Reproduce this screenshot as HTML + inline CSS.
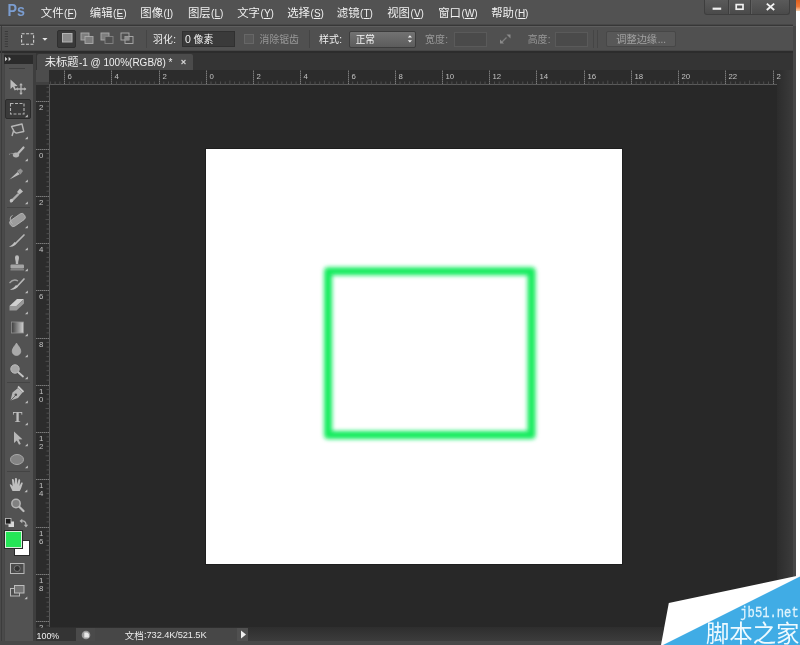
<!DOCTYPE html><html><head><meta charset="utf-8"><title>Photoshop</title><style>
html,body{margin:0;padding:0;background:#282828;}
body{width:800px;height:645px;overflow:hidden;position:relative;font-family:"Liberation Sans",sans-serif;}
#app{position:absolute;left:0;top:0;width:800px;height:645px;overflow:hidden;}
#app>div{position:absolute;}
#ov{position:absolute;left:0;top:0;filter:blur(0.4px);}
</style></head><body><div id="app">
<div style="left:0px;top:0px;width:800px;height:645px;background:#282828;"></div>
<div style="left:0px;top:0px;width:800px;height:26px;background:#525252;"></div>
<div style="left:0px;top:24px;width:793px;height:1px;background:#474747;"></div>
<div style="left:0px;top:25px;width:793px;height:1px;background:#373737;"></div>
<div style="left:0px;top:26px;width:800px;height:26px;background:#505050;"></div>
<div style="left:0px;top:26px;width:800px;height:1px;background:#5e5e5e;"></div>
<div style="left:0px;top:50px;width:800px;height:1px;background:#474747;"></div>
<div style="left:0px;top:51px;width:800px;height:2px;background:#2c2c2c;"></div>
<div style="left:36px;top:53px;width:760px;height:17px;background:#343434;"></div>
<div style="left:37px;top:54px;width:156px;height:16px;background:#4b4b4b;border-radius:2px 2px 0 0;"></div>
<div style="left:36px;top:70px;width:741px;height:15px;background:#2c2c2c;"></div>
<div style="left:49px;top:84px;width:728px;height:1px;background:#5a5a5a;"></div>
<div style="left:777px;top:70px;width:16px;height:558px;background:linear-gradient(90deg,#2c2c2c,#3b3b3b);"></div>
<div style="left:36px;top:70px;width:13px;height:12px;background:#4c4c4c;"></div>
<div style="left:36px;top:82px;width:13px;height:3px;background:#404040;"></div>
<div style="left:36px;top:85px;width:13px;height:543px;background:#2c2c2c;"></div>
<div style="left:49px;top:84px;width:1px;height:544px;background:#5a5a5a;"></div>
<div style="left:0px;top:53px;width:36px;height:592px;background:#3e3e3e;"></div>
<div style="left:2px;top:55px;width:31px;height:9px;background:#2b2b2b;"></div>
<div style="left:2px;top:64px;width:31px;height:577px;background:#525252;"></div>
<div style="left:0px;top:53px;width:4px;height:592px;background:#4a4a4a;"></div>
<div style="left:4px;top:64px;width:1px;height:577px;background:#464646;"></div>
<div style="left:1px;top:26px;width:1px;height:615px;background:#3c3c3c;"></div>
<div style="left:36px;top:627px;width:757px;height:14px;background:linear-gradient(#2e2e2e,#3c3c3c);"></div>
<div style="left:36px;top:628px;width:40px;height:13px;background:#343434;"></div>
<div style="left:76px;top:628px;width:19px;height:13px;background:#4a4a4a;"></div>
<div style="left:95px;top:628px;width:153px;height:13px;background:#474747;"></div>
<div style="left:0px;top:641px;width:800px;height:4px;background:#484848;"></div>
<div style="left:793px;top:26px;width:3px;height:619px;background:#474747;"></div>
<div style="left:796px;top:0px;width:4px;height:645px;background:#ffffff;"></div>
<div style="left:796px;top:0px;width:4px;height:11px;background:linear-gradient(#e2601c 0%,#ee7a3a 60%,#fbd9bc 100%);"></div>
<div style="left:205px;top:148px;width:418px;height:417px;background:#1e1e1e;"></div>
<div style="left:206px;top:149px;width:416px;height:415px;background:#ffffff;"></div>
<div style="left:704px;top:0px;width:86px;height:15px;background:linear-gradient(#5a5a5a,#4a4a4a);border:1px solid #3e3e3e;border-top:none;box-sizing:border-box;border-radius:0 0 3px 3px;"></div>
<div style="left:728px;top:0px;width:1px;height:14px;background:#3e3e3e;"></div>
<div style="left:750px;top:0px;width:1px;height:14px;background:#3e3e3e;"></div>
<div style="left:729px;top:0px;width:1px;height:14px;background:#5e5e5e;"></div>
<div style="left:751px;top:0px;width:1px;height:14px;background:#5e5e5e;"></div>
<div style="left:146px;top:30px;width:1px;height:18px;background:#454545;"></div>
<div style="left:57px;top:30px;width:19px;height:18px;background:#393939;border:1px solid #2f2f2f;box-sizing:border-box;border-radius:2px;"></div>
<div style="left:182px;top:31px;width:53px;height:16px;background:#3a3a3a;border:1px solid #303030;box-sizing:border-box;"></div>
<div style="left:244px;top:34px;width:10px;height:10px;background:#585858;border:1px solid #676767;box-sizing:border-box;"></div>
<div style="left:309px;top:30px;width:1px;height:18px;background:#444;"></div>
<div style="left:349px;top:31px;width:67px;height:17px;background:linear-gradient(#727272,#5c5c5c);border:1px solid #3c3c3c;box-sizing:border-box;border-radius:2px;"></div>
<div style="left:454px;top:32px;width:33px;height:15px;background:#4a4a4a;border:1px solid #5a5a5a;box-sizing:border-box;"></div>
<div style="left:555px;top:32px;width:33px;height:15px;background:#4a4a4a;border:1px solid #5a5a5a;box-sizing:border-box;"></div>
<div style="left:593px;top:30px;width:1px;height:18px;background:#454545;"></div>
<div style="left:597px;top:30px;width:1px;height:18px;background:#454545;"></div>
<div style="left:606px;top:31px;width:70px;height:16px;background:#585858;border:1px solid #474747;box-sizing:border-box;border-radius:2px;"></div>
<div style="left:9px;top:68px;width:16px;height:1px;background:#3f3f3f;"></div>
<div style="left:5px;top:99px;width:26px;height:20px;background:#3a3a3a;border:1px solid #2b2b2b;box-sizing:border-box;border-radius:2px;"></div>
<div style="left:7px;top:207px;width:23px;height:1px;background:#444444;"></div>
<div style="left:7px;top:382px;width:23px;height:1px;background:#444444;"></div>
<div style="left:7px;top:471px;width:23px;height:1px;background:#444444;"></div>
<div style="left:14px;top:540px;width:16px;height:16px;background:#ffffff;border:1px solid #2a2a2a;box-sizing:border-box;"></div>
<div style="left:5px;top:531px;width:17px;height:17px;background:#25e657;border:1px solid #d8f0dc;box-sizing:border-box;outline:1px solid #2a2a2a;"></div>
<div style="left:237px;top:628px;width:11px;height:13px;background:#505050;"></div>
<svg id="ov" width="800" height="645" viewBox="0 0 800 645">
<text x="0" y="0" transform="translate(7.5,16.2) scale(0.84,1)" font-family="Liberation Sans" font-size="17" font-weight="bold" fill="#7b9dd0">Ps</text>
<text x="40.8" y="17" font-family="'Liberation Sans', 'Noto Sans CJK SC', sans-serif" font-size="11.5" fill="#f0f0f0" text-anchor="start" textLength="22.8" lengthAdjust="spacingAndGlyphs">文件</text>
<text x="64.10000000000001" y="17" font-family="Liberation Sans" font-size="10" font-weight="normal" fill="#f0f0f0" text-anchor="start" >(</text>
<text x="67.50000000000001" y="17" font-family="Liberation Sans" font-size="10" font-weight="normal" fill="#f0f0f0" text-anchor="start" text-decoration="underline">F</text>
<text x="73.60000000000001" y="17" font-family="Liberation Sans" font-size="10" font-weight="normal" fill="#f0f0f0" text-anchor="start" >)</text>
<text x="89.8" y="17" font-family="'Liberation Sans', 'Noto Sans CJK SC', sans-serif" font-size="11.5" fill="#f0f0f0" text-anchor="start" textLength="22.8" lengthAdjust="spacingAndGlyphs">编辑</text>
<text x="113.09999999999998" y="17" font-family="Liberation Sans" font-size="10" font-weight="normal" fill="#f0f0f0" text-anchor="start" >(</text>
<text x="116.49999999999999" y="17" font-family="Liberation Sans" font-size="10" font-weight="normal" fill="#f0f0f0" text-anchor="start" text-decoration="underline">E</text>
<text x="123.19999999999999" y="17" font-family="Liberation Sans" font-size="10" font-weight="normal" fill="#f0f0f0" text-anchor="start" >)</text>
<text x="140.3" y="17" font-family="'Liberation Sans', 'Noto Sans CJK SC', sans-serif" font-size="11.5" fill="#f0f0f0" text-anchor="start" textLength="22.8" lengthAdjust="spacingAndGlyphs">图像</text>
<text x="163.5" y="17" font-family="Liberation Sans" font-size="10" font-weight="normal" fill="#f0f0f0" text-anchor="start" >(</text>
<text x="166.9" y="17" font-family="Liberation Sans" font-size="10" font-weight="normal" fill="#f0f0f0" text-anchor="start" text-decoration="underline">I</text>
<text x="169.70000000000002" y="17" font-family="Liberation Sans" font-size="10" font-weight="normal" fill="#f0f0f0" text-anchor="start" >)</text>
<text x="187.9" y="17" font-family="'Liberation Sans', 'Noto Sans CJK SC', sans-serif" font-size="11.5" fill="#f0f0f0" text-anchor="start" textLength="22.8" lengthAdjust="spacingAndGlyphs">图层</text>
<text x="211.1" y="17" font-family="Liberation Sans" font-size="10" font-weight="normal" fill="#f0f0f0" text-anchor="start" >(</text>
<text x="214.5" y="17" font-family="Liberation Sans" font-size="10" font-weight="normal" fill="#f0f0f0" text-anchor="start" text-decoration="underline">L</text>
<text x="220.1" y="17" font-family="Liberation Sans" font-size="10" font-weight="normal" fill="#f0f0f0" text-anchor="start" >)</text>
<text x="237.2" y="17" font-family="'Liberation Sans', 'Noto Sans CJK SC', sans-serif" font-size="11.5" fill="#f0f0f0" text-anchor="start" textLength="22.8" lengthAdjust="spacingAndGlyphs">文字</text>
<text x="260.5" y="17" font-family="Liberation Sans" font-size="10" font-weight="normal" fill="#f0f0f0" text-anchor="start" >(</text>
<text x="263.9" y="17" font-family="Liberation Sans" font-size="10" font-weight="normal" fill="#f0f0f0" text-anchor="start" text-decoration="underline">Y</text>
<text x="270.59999999999997" y="17" font-family="Liberation Sans" font-size="10" font-weight="normal" fill="#f0f0f0" text-anchor="start" >)</text>
<text x="287.2" y="17" font-family="'Liberation Sans', 'Noto Sans CJK SC', sans-serif" font-size="11.5" fill="#f0f0f0" text-anchor="start" textLength="22.8" lengthAdjust="spacingAndGlyphs">选择</text>
<text x="310.50000000000006" y="17" font-family="Liberation Sans" font-size="10" font-weight="normal" fill="#f0f0f0" text-anchor="start" >(</text>
<text x="313.90000000000003" y="17" font-family="Liberation Sans" font-size="10" font-weight="normal" fill="#f0f0f0" text-anchor="start" text-decoration="underline">S</text>
<text x="320.6" y="17" font-family="Liberation Sans" font-size="10" font-weight="normal" fill="#f0f0f0" text-anchor="start" >)</text>
<text x="336.8" y="17" font-family="'Liberation Sans', 'Noto Sans CJK SC', sans-serif" font-size="11.5" fill="#f0f0f0" text-anchor="start" textLength="22.8" lengthAdjust="spacingAndGlyphs">滤镜</text>
<text x="360.1000000000001" y="17" font-family="Liberation Sans" font-size="10" font-weight="normal" fill="#f0f0f0" text-anchor="start" >(</text>
<text x="363.50000000000006" y="17" font-family="Liberation Sans" font-size="10" font-weight="normal" fill="#f0f0f0" text-anchor="start" text-decoration="underline">T</text>
<text x="369.6000000000001" y="17" font-family="Liberation Sans" font-size="10" font-weight="normal" fill="#f0f0f0" text-anchor="start" >)</text>
<text x="387.2" y="17" font-family="'Liberation Sans', 'Noto Sans CJK SC', sans-serif" font-size="11.5" fill="#f0f0f0" text-anchor="start" textLength="22.8" lengthAdjust="spacingAndGlyphs">视图</text>
<text x="410.50000000000006" y="17" font-family="Liberation Sans" font-size="10" font-weight="normal" fill="#f0f0f0" text-anchor="start" >(</text>
<text x="413.90000000000003" y="17" font-family="Liberation Sans" font-size="10" font-weight="normal" fill="#f0f0f0" text-anchor="start" text-decoration="underline">V</text>
<text x="420.6" y="17" font-family="Liberation Sans" font-size="10" font-weight="normal" fill="#f0f0f0" text-anchor="start" >)</text>
<text x="438.2" y="17" font-family="'Liberation Sans', 'Noto Sans CJK SC', sans-serif" font-size="11.5" fill="#f0f0f0" text-anchor="start" textLength="22.8" lengthAdjust="spacingAndGlyphs">窗口</text>
<text x="461.50000000000006" y="17" font-family="Liberation Sans" font-size="10" font-weight="normal" fill="#f0f0f0" text-anchor="start" >(</text>
<text x="464.90000000000003" y="17" font-family="Liberation Sans" font-size="10" font-weight="normal" fill="#f0f0f0" text-anchor="start" text-decoration="underline">W</text>
<text x="474.3" y="17" font-family="Liberation Sans" font-size="10" font-weight="normal" fill="#f0f0f0" text-anchor="start" >)</text>
<text x="491.2" y="17" font-family="'Liberation Sans', 'Noto Sans CJK SC', sans-serif" font-size="11.5" fill="#f0f0f0" text-anchor="start" textLength="22.8" lengthAdjust="spacingAndGlyphs">帮助</text>
<text x="514.5" y="17" font-family="Liberation Sans" font-size="10" font-weight="normal" fill="#f0f0f0" text-anchor="start" >(</text>
<text x="517.9" y="17" font-family="Liberation Sans" font-size="10" font-weight="normal" fill="#f0f0f0" text-anchor="start" text-decoration="underline">H</text>
<text x="525.1" y="17" font-family="Liberation Sans" font-size="10" font-weight="normal" fill="#f0f0f0" text-anchor="start" >)</text>
<rect x="712.6" y="7.6" width="8.6" height="2.2" fill="#f0f0f0"/>
<rect x="736.2" y="4.6" width="6.8" height="4.6" fill="none" stroke="#f0f0f0" stroke-width="1.7"/>
<path d="M766.8 3.6L774.2 10M774.2 3.6L766.8 10" stroke="#f2f2f2" stroke-width="1.9" fill="none"/>
<rect x="4.8" y="31.0" width="3.2" height="1" fill="#3a3a3a"/>
<rect x="4.8" y="33.5" width="3.2" height="1" fill="#3a3a3a"/>
<rect x="4.8" y="36.0" width="3.2" height="1" fill="#3a3a3a"/>
<rect x="4.8" y="38.5" width="3.2" height="1" fill="#3a3a3a"/>
<rect x="4.8" y="41.0" width="3.2" height="1" fill="#3a3a3a"/>
<rect x="4.8" y="43.5" width="3.2" height="1" fill="#3a3a3a"/>
<rect x="4.8" y="46.0" width="3.2" height="1" fill="#3a3a3a"/>
<rect x="21.6" y="33.8" width="12" height="10.4" fill="none" stroke="#d0d0d0" stroke-width="1.1" stroke-dasharray="3 1.5"/>
<path d="M42.3 38h5.2l-2.6 2.8z" fill="#e6e6e6"/>
<rect x="62.5" y="33.5" width="9.5" height="8.5" fill="#8c8c8c" stroke="#b4b4b4" stroke-width="1"/>
<g opacity="0.85"><rect x="81" y="33" width="8" height="7" fill="#858585" stroke="#bdbdbd" stroke-width="0.9"/><rect x="85" y="36.5" width="8" height="7" fill="#858585" stroke="#bdbdbd" stroke-width="0.9"/></g>
<g opacity="0.85"><rect x="101" y="33" width="8" height="7" fill="#858585" stroke="#bdbdbd" stroke-width="0.9"/><rect x="105" y="36.5" width="8" height="7" fill="#505050" stroke="#909090" stroke-width="0.9"/></g>
<g opacity="0.85"><rect x="121" y="33" width="8" height="7" fill="none" stroke="#bdbdbd" stroke-width="0.9"/><rect x="125" y="36.5" width="8" height="7" fill="none" stroke="#bdbdbd" stroke-width="0.9"/><rect x="125" y="36.5" width="4" height="3.5" fill="#9a9a9a"/></g>
<text x="153" y="42.8" font-family="'Liberation Sans', 'Noto Sans CJK SC', sans-serif" font-size="10" fill="#f0f0f0" text-anchor="start" textLength="19.8" lengthAdjust="spacingAndGlyphs">羽化</text>
<text x="173.3" y="42.5" font-family="Liberation Sans" font-size="10" font-weight="normal" fill="#f0f0f0" text-anchor="start" >:</text>
<text x="185" y="43" font-family="Liberation Sans" font-size="10.5" font-weight="normal" fill="#f0f0f0" text-anchor="start" >0</text>
<text x="193.5" y="42.8" font-family="'Liberation Sans', 'Noto Sans CJK SC', sans-serif" font-size="10" fill="#f0f0f0" text-anchor="start" textLength="19.8" lengthAdjust="spacingAndGlyphs">像素</text>
<text x="259.6" y="42.8" font-family="'Liberation Sans', 'Noto Sans CJK SC', sans-serif" font-size="10" fill="#989898" text-anchor="start" textLength="39.3" lengthAdjust="spacingAndGlyphs">消除锯齿</text>
<text x="319" y="42.8" font-family="'Liberation Sans', 'Noto Sans CJK SC', sans-serif" font-size="10" fill="#f0f0f0" text-anchor="start" textLength="19.9" lengthAdjust="spacingAndGlyphs">样式</text>
<text x="339.3" y="42.5" font-family="Liberation Sans" font-size="10" font-weight="normal" fill="#f0f0f0" text-anchor="start" >:</text>
<text x="355.7" y="43" font-family="'Liberation Sans', 'Noto Sans CJK SC', sans-serif" font-size="10" fill="#f4f4f4" text-anchor="start" textLength="19.2" lengthAdjust="spacingAndGlyphs">正常</text>
<path d="M407.8 37.6l2.1-2.3 2.1 2.3zM407.8 40.2l2.1 2.3 2.1-2.3z" fill="#f0f0f0"/>
<text x="425.1" y="42.8" font-family="'Liberation Sans', 'Noto Sans CJK SC', sans-serif" font-size="10" fill="#989898" text-anchor="start" textLength="19.8" lengthAdjust="spacingAndGlyphs">宽度</text>
<text x="445.3" y="42.5" font-family="Liberation Sans" font-size="10" font-weight="normal" fill="#989898" text-anchor="start" >:</text>
<g opacity="0.8"><path d="M502 42l4.5-4.5" stroke="#8a8a8a" stroke-width="1.2"/><path d="M506.5 34.5h4v4zM500 39.5v4h4z" fill="#9a9a9a"/></g>
<text x="527.7" y="42.8" font-family="'Liberation Sans', 'Noto Sans CJK SC', sans-serif" font-size="10" fill="#989898" text-anchor="start" textLength="19.8" lengthAdjust="spacingAndGlyphs">高度</text>
<text x="547.8" y="42.5" font-family="Liberation Sans" font-size="10" font-weight="normal" fill="#989898" text-anchor="start" >:</text>
<text x="616.2" y="42.8" font-family="'Liberation Sans', 'Noto Sans CJK SC', sans-serif" font-size="10.2" fill="#a2a2a2" text-anchor="start" textLength="40.9" lengthAdjust="spacingAndGlyphs">调整边缘</text>
<text x="657.6999999999998" y="43" font-family="Liberation Sans" font-size="10" font-weight="normal" fill="#a2a2a2" text-anchor="start" >...</text>
<text x="44.7" y="66.3" font-family="'Liberation Sans', 'Noto Sans CJK SC', sans-serif" font-size="11.2" fill="#f0f0f0" text-anchor="start" textLength="33.8" lengthAdjust="spacingAndGlyphs">未标题</text>
<text x="78.9" y="66" font-family="Liberation Sans" font-size="10" font-weight="normal" fill="#f0f0f0" text-anchor="start" >-1 @ 100%(RGB/8) *</text>
<path d="M181.5 60l4 4M185.5 60l-4 4" stroke="#cfcfcf" stroke-width="1.1"/>
<path d="M5 56.8l2.4 2.2-2.4 2.2zM8.6 56.8l2.4 2.2-2.4 2.2z" fill="#d0d0d0"/>
<g opacity="0.86">
<path d="M10.5 79.5l0 9.5 2.4-2.2 1.8 3.6 1.5-.7-1.8-3.5 3.2-.3z" fill="#cfcfcf"/>
<path d="M21 84v10M16.5 89h9" stroke="#c6c6c6" stroke-width="1.3"/><path d="M21 83l1.8 2.2h-3.6zM21 95l1.8-2.2h-3.6zM15.6 89l2.2-1.8v3.6zM26.4 89l-2.2-1.8v3.6z" fill="#c6c6c6"/>
<rect x="10.5" y="103.5" width="13.5" height="10.5" fill="none" stroke="#c8c8c8" stroke-width="1.1" stroke-dasharray="3 1.5"/>
<path d="M27.8 114.5v2.8h-2.8z" fill="#d4d4d4"/>
<path d="M11.5 126.5l10.5-2.5 1.8 7.5-7.5 1.6-2 -1.2zM13.5 131l-1.5 5" fill="none" stroke="#c8c8c8" stroke-width="1.4" stroke-linejoin="round"/>
<path d="M27.8 136.5v2.8h-2.8z" fill="#d4d4d4"/>
<path d="M23.5 147.5l-5.5 6" stroke="#cdcdcd" stroke-width="2.2" stroke-linecap="round"/><ellipse cx="16" cy="155" rx="3.2" ry="2.4" fill="#c4c4c4"/><path d="M9 154.5c2-1.5 4-1.5 5 0" stroke="#9a9a9a" stroke-width="1" fill="none" stroke-dasharray="1.5 1"/>
<path d="M27.8 158.5v2.8h-2.8z" fill="#d4d4d4"/>
<path d="M9.5 179.5l8-7.5 2.2 2.2z" fill="#cfcfcf"/><path d="M17 171l3.5-2.5 2.5 2.5-2.5 3.5z" fill="#9c9c9c"/>
<path d="M27.8 179.5v2.8h-2.8z" fill="#d4d4d4"/>
<path d="M11 201.5l7-7" stroke="#bdbdbd" stroke-width="2.4" stroke-linecap="round"/><path d="M17 192l3-3.5 3 3-3.5 3z" fill="#cfcfcf"/><circle cx="11.5" cy="200.5" r="1.7" fill="#d4d4d4"/>
<path d="M27.8 201.5v2.8h-2.8z" fill="#d4d4d4"/>
<rect x="9" y="216.5" width="17" height="7" rx="3" fill="#a8a8a8" stroke="#c8c8c8" stroke-width=".8" transform="rotate(-35 17.5 220)"/><path d="M12.5 215.5c-3 1-3 6 0 8" fill="none" stroke="#c8c8c8" stroke-width="1"/>
<path d="M27.8 225.5v2.8h-2.8z" fill="#d4d4d4"/>
<path d="M24 235l-8.5 8.5" stroke="#c8c8c8" stroke-width="1.7" stroke-linecap="round"/><path d="M9 246.5c3 .8 6-.5 7.5-3l-2-1.5c-1.5 2.5-3 3.5-5.5 4.5z" fill="#d2d2d2"/>
<path d="M27.8 247.5v2.8h-2.8z" fill="#d4d4d4"/>
<path d="M15 257.5a2 2.3 0 1 1 4 0c0 2-1 3.5-.8 6.5h-2.400c.2-3-.8-4.5-.8-6.5z" fill="#cdcdcd"/><rect x="10.5" y="264.5" width="13.5" height="4" rx="1" fill="#b4b4b4"/><rect x="10.5" y="269.2" width="13.5" height="1.2" fill="#9a9a9a"/>
<path d="M27.8 268.5v2.8h-2.8z" fill="#d4d4d4"/>
<path d="M24 279l-7 7.5" stroke="#c8c8c8" stroke-width="1.7" stroke-linecap="round"/><path d="M10 289.5c3 .8 6.5-.5 8-3l-2-1.5c-1.5 2-3.5 3.5-6 4.5z" fill="#d6d6d6"/><path d="M9.5 283c2.5-3 6-3.5 8.500-2" fill="none" stroke="#b0b0b0" stroke-width="1.3"/>
<path d="M27.8 290.5v2.8h-2.8z" fill="#d4d4d4"/>
<path d="M9.5 306l7.5-7h7l-7.5 7z" fill="#e6e6e6"/><path d="M9.5 306h7v4.5h-7zM16.5 306l7.5-7v4.5l-7.5 7z" fill="#a6a6a6"/>
<path d="M27.8 311.5v2.8h-2.8z" fill="#d4d4d4"/>
<defs><linearGradient id="gg" x1="0" x2="1"><stop offset="0" stop-color="#3c3c3c"/><stop offset="1" stop-color="#e6e6e6"/></linearGradient></defs><rect x="11.5" y="322" width="12" height="11" fill="url(#gg)" stroke="#9a9a9a" stroke-width=".8"/>
<path d="M27.8 333.5v2.8h-2.8z" fill="#d4d4d4"/>
<path d="M16.500 343c1.3 2.6 4.3 5 4.3 8.2a4.3 4.3 0 0 1-8.6 0c0-3.2 3-5.6 4.3-8.2z" fill="#b8b8b8" stroke="#cacaca" stroke-width=".6"/>
<path d="M27.8 354.5v2.8h-2.8z" fill="#d4d4d4"/>
<circle cx="15" cy="369" r="4.2" fill="#b4b4b4" stroke="#cecece" stroke-width="1"/><path d="M18.5 372.5l4.5 4" stroke="#d8d8d8" stroke-width="1.8" stroke-linecap="round"/>
<path d="M27.8 376.5v2.8h-2.8z" fill="#d4d4d4"/>
<path d="M10.5 400.5l2-8 5.5-4.5 4.5 4.5-4.5 5.5z" fill="#c8c8c8"/><circle cx="15.8" cy="394.8" r="1.3" fill="#505050"/><path d="M18 386.5l5.5 5.5" stroke="#dcdcdc" stroke-width="1.8"/><path d="M10.5 400.5l5-5" stroke="#505050" stroke-width=".8"/>
<path d="M27.8 400.5v2.8h-2.8z" fill="#d4d4d4"/>
<text x="17.5" y="422" font-family="Liberation Serif" font-size="14.5" font-weight="bold" fill="#d0d0d0" text-anchor="middle">T</text>
<path d="M27.8 422.5v2.8h-2.8z" fill="#d4d4d4"/>
<path d="M14 431.5v11.5l2.8-2.6 2.2 4.400 1.8-.9-2.2-4.3 3.8-.4z" fill="#c8c8c8"/>
<path d="M27.8 443.5v2.8h-2.8z" fill="#d4d4d4"/>
<ellipse cx="17" cy="459.5" rx="6.5" ry="5" fill="#8c8c8c" stroke="#b8b8b8" stroke-width="1"/>
<path d="M27.8 465.5v2.8h-2.8z" fill="#d4d4d4"/>
<path d="M12.5 491c-1-2.5-2.5-4.5-2.8-6.5 .8-.8 2 .2 3 2l-.8-7c.9-.9 1.8-.4 2 .6l.9 4.400 .2-6c.9-.8 1.900-.5 2 .5l.3 5.5 1.2-5c1-.6 1.8 0 1.7 1l-.7 5.5 1.8-3.400c.9-.5 1.6.1 1.400 1l-1.5 4.400c-.5 1.5-1 2.2-1.6 3z" fill="#d2d2d2"/>
<path d="M27.3 489.5v2.8h-2.8z" fill="#d4d4d4"/>
<circle cx="16" cy="503.5" r="4.2" fill="#8a8a8a" stroke="#c4c4c4" stroke-width="1.5"/><path d="M19.5 507l4 4" stroke="#d0d0d0" stroke-width="2.2" stroke-linecap="round"/>
<rect x="8.5" y="521.5" width="5.5" height="5.5" fill="#f0f0f0"/><rect x="5.5" y="518.5" width="5.5" height="5.5" fill="#151515" stroke="#d8d8d8" stroke-width=".8"/>
<path d="M21.5 521c3-.5 4.5 1 4.5 4" fill="none" stroke="#c4c4c4" stroke-width="1.2"/><path d="M19.5 521l2.8-2.2v4.400zM26 527.5l-2.2-2.8h4.400z" fill="#c4c4c4"/>
<rect x="10.5" y="563.5" width="13.5" height="10" fill="#4a4a4a" stroke="#cacaca" stroke-width="1"/><circle cx="17.2" cy="568.5" r="3" fill="#2e2e2e" stroke="#8a8a8a" stroke-width=".8"/>
<rect x="10.5" y="588.5" width="9" height="7.5" fill="#505050" stroke="#cacaca" stroke-width="1"/><rect x="14.5" y="585.5" width="9.5" height="7.5" fill="#7a7a7a" stroke="#d0d0d0" stroke-width="1"/>
<path d="M27.3 596.5v2.8h-2.8z" fill="#d4d4d4"/>
</g>
<defs><clipPath id="chr"><rect x="49" y="70" width="732" height="16"/></clipPath><clipPath id="cvr"><rect x="36" y="85" width="14" height="543"/></clipPath></defs>
<g clip-path="url(#chr)">
<path d="M50.4 81.5v3 M55.1 81.5v3 M59.9 81.5v3 M69.3 81.5v3 M74.0 81.5v3 M78.8 81.5v3 M83.5 81.5v3 M88.2 80.5v4 M92.9 81.5v3 M97.6 81.5v3 M102.4 81.5v3 M107.1 81.5v3 M116.5 81.5v3 M121.3 81.5v3 M126.0 81.5v3 M130.7 81.5v3 M135.4 80.5v4 M140.2 81.5v3 M144.9 81.5v3 M149.6 81.5v3 M154.3 81.5v3 M163.8 81.5v3 M168.5 81.5v3 M173.2 81.5v3 M178.0 81.5v3 M182.7 80.5v4 M187.4 81.5v3 M192.1 81.5v3 M196.9 81.5v3 M201.6 81.5v3 M211.0 81.5v3 M215.7 81.5v3 M220.5 81.5v3 M225.2 81.5v3 M229.9 80.5v4 M234.6 81.5v3 M239.4 81.5v3 M244.1 81.5v3 M248.8 81.5v3 M258.3 81.5v3 M263.0 81.5v3 M267.7 81.5v3 M272.4 81.5v3 M277.2 80.5v4 M281.9 81.5v3 M286.6 81.5v3 M291.3 81.5v3 M296.1 81.5v3 M305.5 81.5v3 M310.2 81.5v3 M315.0 81.5v3 M319.7 81.5v3 M324.4 80.5v4 M329.1 81.5v3 M333.8 81.5v3 M338.6 81.5v3 M343.3 81.5v3 M352.7 81.5v3 M357.5 81.5v3 M362.2 81.5v3 M366.9 81.5v3 M371.6 80.5v4 M376.4 81.5v3 M381.1 81.5v3 M385.8 81.5v3 M390.5 81.5v3 M400.0 81.5v3 M404.7 81.5v3 M409.4 81.5v3 M414.2 81.5v3 M418.9 80.5v4 M423.6 81.5v3 M428.3 81.5v3 M433.1 81.5v3 M437.8 81.5v3 M447.2 81.5v3 M451.9 81.5v3 M456.7 81.5v3 M461.4 81.5v3 M466.1 80.5v4 M470.8 81.5v3 M475.6 81.5v3 M480.3 81.5v3 M485.0 81.5v3 M494.5 81.5v3 M499.2 81.5v3 M503.9 81.5v3 M508.6 81.5v3 M513.4 80.5v4 M518.1 81.5v3 M522.8 81.5v3 M527.5 81.5v3 M532.3 81.5v3 M541.7 81.5v3 M546.4 81.5v3 M551.2 81.5v3 M555.9 81.5v3 M560.6 80.5v4 M565.3 81.5v3 M570.0 81.5v3 M574.8 81.5v3 M579.5 81.5v3 M588.9 81.5v3 M593.7 81.5v3 M598.4 81.5v3 M603.1 81.5v3 M607.8 80.5v4 M612.6 81.5v3 M617.3 81.5v3 M622.0 81.5v3 M626.7 81.5v3 M636.2 81.5v3 M640.9 81.5v3 M645.6 81.5v3 M650.4 81.5v3 M655.1 80.5v4 M659.8 81.5v3 M664.5 81.5v3 M669.3 81.5v3 M674.0 81.5v3 M683.4 81.5v3 M688.1 81.5v3 M692.9 81.5v3 M697.6 81.5v3 M702.3 80.5v4 M707.0 81.5v3 M711.8 81.5v3 M716.5 81.5v3 M721.2 81.5v3 M730.7 81.5v3 M735.4 81.5v3 M740.1 81.5v3 M744.8 81.5v3 M749.6 80.5v4 M754.3 81.5v3 M759.0 81.5v3 M763.7 81.5v3 M768.5 81.5v3" stroke="#4e4e4e" stroke-width="1"/>
<text x="67.4" y="79" font-family="Liberation Sans" font-size="7.8" font-weight="normal" fill="#c2c2c2" text-anchor="start" >6</text>
<text x="114.4" y="79" font-family="Liberation Sans" font-size="7.8" font-weight="normal" fill="#c2c2c2" text-anchor="start" >4</text>
<text x="162.4" y="79" font-family="Liberation Sans" font-size="7.8" font-weight="normal" fill="#c2c2c2" text-anchor="start" >2</text>
<text x="209.4" y="79" font-family="Liberation Sans" font-size="7.8" font-weight="normal" fill="#c2c2c2" text-anchor="start" >0</text>
<text x="256.4" y="79" font-family="Liberation Sans" font-size="7.8" font-weight="normal" fill="#c2c2c2" text-anchor="start" >2</text>
<text x="303.4" y="79" font-family="Liberation Sans" font-size="7.8" font-weight="normal" fill="#c2c2c2" text-anchor="start" >4</text>
<text x="351.4" y="79" font-family="Liberation Sans" font-size="7.8" font-weight="normal" fill="#c2c2c2" text-anchor="start" >6</text>
<text x="398.4" y="79" font-family="Liberation Sans" font-size="7.8" font-weight="normal" fill="#c2c2c2" text-anchor="start" >8</text>
<text x="445.4" y="79" font-family="Liberation Sans" font-size="7.8" font-weight="normal" fill="#c2c2c2" text-anchor="start" >10</text>
<text x="492.4" y="79" font-family="Liberation Sans" font-size="7.8" font-weight="normal" fill="#c2c2c2" text-anchor="start" >12</text>
<text x="539.4" y="79" font-family="Liberation Sans" font-size="7.8" font-weight="normal" fill="#c2c2c2" text-anchor="start" >14</text>
<text x="587.4" y="79" font-family="Liberation Sans" font-size="7.8" font-weight="normal" fill="#c2c2c2" text-anchor="start" >16</text>
<text x="634.4" y="79" font-family="Liberation Sans" font-size="7.8" font-weight="normal" fill="#c2c2c2" text-anchor="start" >18</text>
<text x="681.4" y="79" font-family="Liberation Sans" font-size="7.8" font-weight="normal" fill="#c2c2c2" text-anchor="start" >20</text>
<text x="728.4" y="79" font-family="Liberation Sans" font-size="7.8" font-weight="normal" fill="#c2c2c2" text-anchor="start" >22</text>
<text x="776.4" y="79" font-family="Liberation Sans" font-size="7.8" font-weight="normal" fill="#c2c2c2" text-anchor="start" >24</text>
<path d="M64.5 70.5v13.5 M111.5 70.5v13.5 M159.5 70.5v13.5 M206.5 70.5v13.5 M253.5 70.5v13.5 M300.5 70.5v13.5 M348.5 70.5v13.5 M395.5 70.5v13.5 M442.5 70.5v13.5 M489.5 70.5v13.5 M536.5 70.5v13.5 M584.5 70.5v13.5 M631.5 70.5v13.5 M678.5 70.5v13.5 M725.5 70.5v13.5 M773.5 70.5v13.5" stroke="#7a7a7a" stroke-width="1" stroke-dasharray="1.5 0.5"/>
</g>
<g clip-path="url(#cvr)">
<path d="M46.5 87.3h3 M46.5 92.0h3 M46.5 96.7h3 M46.5 106.2h3 M46.5 110.9h3 M46.5 115.6h3 M46.5 120.4h3 M45.5 125.1h4 M46.5 129.8h3 M46.5 134.5h3 M46.5 139.3h3 M46.5 144.0h3 M46.5 153.4h3 M46.5 158.1h3 M46.5 162.9h3 M46.5 167.6h3 M45.5 172.3h4 M46.5 177.0h3 M46.5 181.8h3 M46.5 186.5h3 M46.5 191.2h3 M46.5 200.7h3 M46.5 205.4h3 M46.5 210.1h3 M46.5 214.8h3 M45.5 219.6h4 M46.5 224.3h3 M46.5 229.0h3 M46.5 233.7h3 M46.5 238.5h3 M46.5 247.9h3 M46.5 252.6h3 M46.5 257.4h3 M46.5 262.1h3 M45.5 266.8h4 M46.5 271.5h3 M46.5 276.2h3 M46.5 281.0h3 M46.5 285.7h3 M46.5 295.1h3 M46.5 299.9h3 M46.5 304.6h3 M46.5 309.3h3 M45.5 314.0h4 M46.5 318.8h3 M46.5 323.5h3 M46.5 328.2h3 M46.5 332.9h3 M46.5 342.4h3 M46.5 347.1h3 M46.5 351.8h3 M46.5 356.6h3 M45.5 361.3h4 M46.5 366.0h3 M46.5 370.7h3 M46.5 375.5h3 M46.5 380.2h3 M46.5 389.6h3 M46.5 394.3h3 M46.5 399.1h3 M46.5 403.8h3 M45.5 408.5h4 M46.5 413.2h3 M46.5 418.0h3 M46.5 422.7h3 M46.5 427.4h3 M46.5 436.9h3 M46.5 441.6h3 M46.5 446.3h3 M46.5 451.0h3 M45.5 455.8h4 M46.5 460.5h3 M46.5 465.2h3 M46.5 469.9h3 M46.5 474.7h3 M46.5 484.1h3 M46.5 488.8h3 M46.5 493.6h3 M46.5 498.3h3 M45.5 503.0h4 M46.5 507.7h3 M46.5 512.4h3 M46.5 517.2h3 M46.5 521.9h3 M46.5 531.3h3 M46.5 536.1h3 M46.5 540.8h3 M46.5 545.5h3 M45.5 550.2h4 M46.5 555.0h3 M46.5 559.7h3 M46.5 564.4h3 M46.5 569.1h3 M46.5 578.6h3 M46.5 583.3h3 M46.5 588.0h3 M46.5 592.8h3 M45.5 597.5h4 M46.5 602.2h3 M46.5 606.9h3 M46.5 611.7h3 M46.5 616.4h3 M46.5 625.8h3" stroke="#4e4e4e" stroke-width="1"/>
<text x="39" y="110.2" font-family="Liberation Sans" font-size="7.8" font-weight="normal" fill="#c2c2c2" text-anchor="start" >2</text>
<text x="39" y="158.2" font-family="Liberation Sans" font-size="7.8" font-weight="normal" fill="#c2c2c2" text-anchor="start" >0</text>
<text x="39" y="205.2" font-family="Liberation Sans" font-size="7.8" font-weight="normal" fill="#c2c2c2" text-anchor="start" >2</text>
<text x="39" y="252.2" font-family="Liberation Sans" font-size="7.8" font-weight="normal" fill="#c2c2c2" text-anchor="start" >4</text>
<text x="39" y="299.2" font-family="Liberation Sans" font-size="7.8" font-weight="normal" fill="#c2c2c2" text-anchor="start" >6</text>
<text x="39" y="347.2" font-family="Liberation Sans" font-size="7.8" font-weight="normal" fill="#c2c2c2" text-anchor="start" >8</text>
<text x="39" y="394.2" font-family="Liberation Sans" font-size="7.8" font-weight="normal" fill="#c2c2c2" text-anchor="start" >1</text>
<text x="39" y="401.8" font-family="Liberation Sans" font-size="7.8" font-weight="normal" fill="#c2c2c2" text-anchor="start" >0</text>
<text x="39" y="441.2" font-family="Liberation Sans" font-size="7.8" font-weight="normal" fill="#c2c2c2" text-anchor="start" >1</text>
<text x="39" y="448.8" font-family="Liberation Sans" font-size="7.8" font-weight="normal" fill="#c2c2c2" text-anchor="start" >2</text>
<text x="39" y="488.2" font-family="Liberation Sans" font-size="7.8" font-weight="normal" fill="#c2c2c2" text-anchor="start" >1</text>
<text x="39" y="495.8" font-family="Liberation Sans" font-size="7.8" font-weight="normal" fill="#c2c2c2" text-anchor="start" >4</text>
<text x="39" y="536.2" font-family="Liberation Sans" font-size="7.8" font-weight="normal" fill="#c2c2c2" text-anchor="start" >1</text>
<text x="39" y="543.8000000000001" font-family="Liberation Sans" font-size="7.8" font-weight="normal" fill="#c2c2c2" text-anchor="start" >6</text>
<text x="39" y="583.2" font-family="Liberation Sans" font-size="7.8" font-weight="normal" fill="#c2c2c2" text-anchor="start" >1</text>
<text x="39" y="590.8000000000001" font-family="Liberation Sans" font-size="7.8" font-weight="normal" fill="#c2c2c2" text-anchor="start" >8</text>
<text x="39" y="630.2" font-family="Liberation Sans" font-size="7.8" font-weight="normal" fill="#c2c2c2" text-anchor="start" >2</text>
<text x="39" y="637.8000000000001" font-family="Liberation Sans" font-size="7.8" font-weight="normal" fill="#c2c2c2" text-anchor="start" >0</text>
<path d="M36 101.5h13 M36 149.5h13 M36 196.5h13 M36 243.5h13 M36 290.5h13 M36 338.5h13 M36 385.5h13 M36 432.5h13 M36 479.5h13 M36 527.5h13 M36 574.5h13 M36 621.5h13" stroke="#7a7a7a" stroke-width="1" stroke-dasharray="1.5 0.5"/>
</g>
<defs><filter id="bl" x="-10%" y="-10%" width="120%" height="120%"><feGaussianBlur stdDeviation="2.2"/></filter></defs>
<rect x="328.1" y="271.3" width="203.4" height="163.7" fill="none" stroke="#12ec5e" stroke-width="8" stroke-linejoin="round" filter="url(#bl)"/>
<text x="36.6" y="638.6" font-family="Liberation Sans" font-size="9.6" font-weight="normal" fill="#f0f0f0" text-anchor="start" textLength="22.6" lengthAdjust="spacingAndGlyphs">100%</text>
<circle cx="86" cy="635" r="4.3" fill="#9a9a9a"/><path d="M84.3 632.4h3l1.6 1.6v3.6h-4.6z" fill="#e8e8e8"/>
<text x="124.7" y="638.6" font-family="'Liberation Sans', 'Noto Sans CJK SC', sans-serif" font-size="9.6" fill="#ececec" text-anchor="start" textLength="18.9" lengthAdjust="spacingAndGlyphs">文档</text>
<text x="144.10000000000002" y="638.4" font-family="Liberation Sans" font-size="9.3" font-weight="normal" fill="#ececec" text-anchor="start" textLength="62.5" lengthAdjust="spacing">:732.4K/521.5K</text>
<path d="M241 630.6l5 4-5 4z" fill="#f0f0f0"/>
<path d="M668.8 603L800 575.2V645H661z" fill="#ffffff"/>
<path d="M663 645L800 576.5V645z" fill="#40ace5"/>
<text x="0" y="0" transform="translate(740.3,617.3) scale(0.87,1)" font-family="Liberation Mono" font-size="14" fill="#dff4fd" stroke="#dff4fd" stroke-width="0.25">jb51.net</text>
<text x="706" y="642" font-family="'Liberation Sans', 'Noto Sans CJK SC', sans-serif" font-size="23.5" fill="#eefaff" text-anchor="start" textLength="93.5" lengthAdjust="spacingAndGlyphs">脚本之家</text>
</svg></div></body></html>
